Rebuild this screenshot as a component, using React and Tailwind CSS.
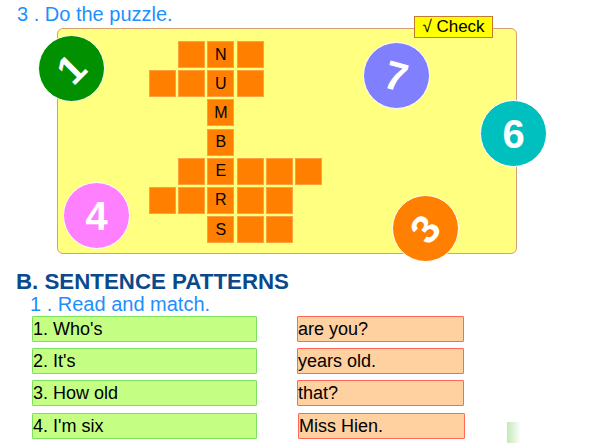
import React from 'react';

const rows = [
  ['', 'o', 'N', 'o', '', ''],
  ['o', 'o', 'U', 'o', '', ''],
  ['', '', 'M', '', '', ''],
  ['', '', 'B', '', '', ''],
  ['', 'o', 'E', 'o', 'o', 'o'],
  ['o', 'o', 'R', 'o', 'o', ''],
  ['', '', 'S', 'o', 'o', ''],
];

const circles = [
  { n: '1', cls: 'left-[38px] top-[35px] bg-[#009000]', rot: 'rotate-[-45deg] font-bold' },
  { n: '7', cls: 'left-[363px] top-[42px] bg-[#8080ff]', rot: 'rotate-[15deg] font-bold' },
  { n: '6', cls: 'left-[480px] top-[100px] bg-[#00bfbf]', rot: 'font-bold' },
  { n: '4', cls: 'left-[63px] top-[182px] bg-[#ff80ff]', rot: 'font-bold' },
  { n: '3', cls: 'left-[392px] top-[195px] bg-[#ff8000]', rot: 'rotate-[-50deg] font-bold' },
];

const left = ["1. Who's", "2. It's", '3. How old', "4. I'm six"];
const right = ['are you?', 'years old.', 'that?', 'Miss Hien.'];

export default function App() {
  return (
    <div
      className="relative w-[600px] h-[448px] bg-white overflow-hidden"
      style={{ fontFamily: '"Liberation Sans", Arial, sans-serif' }}
    >
      <div className="pt-[2px] pl-[17px] text-[20px] leading-[24px] text-[#1e8fff]">
        3 . Do the puzzle.
      </div>

      <div className="mt-[2px] ml-[57px] w-[460px] h-[226px] bg-[#ffff80] border border-[#d6a070] rounded-[6px] pl-[91px] pt-[12px]">
        <div className="grid grid-cols-[repeat(6,27px)] auto-rows-[27px] gap-[2.2px]">
          {rows.map((r, i) =>
            r.map((c, j) =>
              c === '' ? (
                <div key={i + '-' + j} />
              ) : (
                <div
                  key={i + '-' + j}
                  className="bg-[#ff8000] border border-[#ffa040] flex items-center justify-center text-[16px] text-black"
                >
                  {c === 'o' ? '' : c}
                </div>
              )
            )
          )}
        </div>
      </div>

      <div className="absolute left-[414px] top-[16px] w-[79px] h-[22px] bg-[#ffff00] border border-[#c87830] flex items-center justify-center text-[17px] leading-[20px] text-black">
        √ Check
      </div>

      {circles.map((c) => (
        <div
          key={c.n}
          className={`absolute w-[67px] h-[67px] rounded-full border border-white flex items-center justify-center ${c.cls}`}
        >
          <span className={`text-white text-[40px] leading-none inline-block ${c.rot}`}>
            {c.n}
          </span>
        </div>
      ))}

      <div className="mt-[17px] pl-[16px] text-[22.3px] leading-[22px] font-bold text-[#0a4a8c]">
        B. SENTENCE PATTERNS
      </div>
      <div className="mt-[1px] pl-[30px] text-[20px] leading-[20px] text-[#1e8fff]">
        1 . Read and match.
      </div>

      <div className="mt-[2px] pl-[32px] flex flex-col gap-[6px]">
        {left.map((t, i) => (
          <div key={t} className={`flex gap-[40px] ${i === 3 ? 'mt-[1px]' : ''}`}>
            <div className="w-[225px] h-[26px] bg-[#c4ff84] border border-[#7ee05e] rounded-[1px] text-[18px] leading-[24px] text-black">
              {t}
            </div>
            <div
              className={`w-[167px] h-[26px] bg-[#ffd0a0] border border-[#ff6a58] rounded-[1px] text-[18px] leading-[24px] text-black ${
                i === 3 ? 'ml-[1px]' : ''
              }`}
            >
              {right[i]}
            </div>
          </div>
        ))}
      </div>

      <div className="absolute left-[507px] top-[422px] w-[14px] h-[21px] bg-gradient-to-r from-[#c4e8b8] to-transparent" />
    </div>
  );
}
